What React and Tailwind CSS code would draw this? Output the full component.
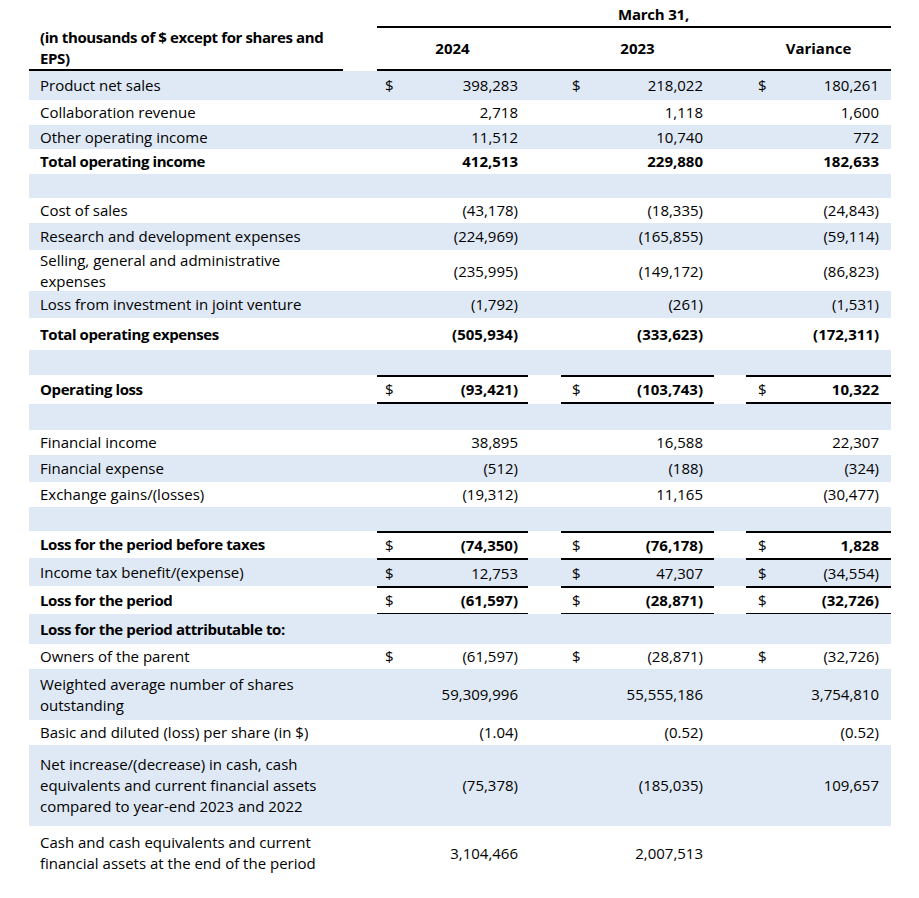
import React from "react";

const GRID =
  "grid grid-cols-[348px_38px_113px_33px_41px_112px_32px_44px_101px]";

const rows = [
  { label: "Product net sales", h: "h-[29px]", blue: true, v: ["$", "398,283", "$", "218,022", "$", "180,261"] },
  { label: "Collaboration revenue", h: "h-[25px]", v: ["", "2,718", "", "1,118", "", "1,600"] },
  { label: "Other operating income", h: "h-[24px]", blue: true, v: ["", "11,512", "", "10,740", "", "772"] },
  { label: "Total operating income", bold: true, h: "h-[25px]", v: ["", "412,513", "", "229,880", "", "182,633"] },
  { blank: true, h: "h-[24px]", blue: true },
  { label: "Cost of sales", h: "h-[25px]", v: ["", "(43,178)", "", "(18,335)", "", "(24,843)"] },
  { label: "Research and development expenses", h: "h-[27px]", blue: true, v: ["", "(224,969)", "", "(165,855)", "", "(59,114)"] },
  { label: ["Selling, general and administrative", "expenses"], h: "h-[41px]", v: ["", "(235,995)", "", "(149,172)", "", "(86,823)"] },
  { label: "Loss from investment in joint venture", h: "h-[27px]", blue: true, v: ["", "(1,792)", "", "(261)", "", "(1,531)"] },
  { label: "Total operating expenses", bold: true, h: "h-[32px]", v: ["", "(505,934)", "", "(333,623)", "", "(172,311)"] },
  { blank: true, h: "h-[25px]", blue: true },
  { label: "Operating loss", bold: true, h: "h-[29px]", top: "border-t-2", bottom: "border-b-2", v: ["$", "(93,421)", "$", "(103,743)", "$", "10,322"] },
  { blank: true, h: "h-[26px]", blue: true },
  { label: "Financial income", h: "h-[25px]", v: ["", "38,895", "", "16,588", "", "22,307"] },
  { label: "Financial expense", h: "h-[27px]", blue: true, v: ["", "(512)", "", "(188)", "", "(324)"] },
  { label: "Exchange gains/(losses)", h: "h-[25px]", v: ["", "(19,312)", "", "11,165", "", "(30,477)"] },
  { blank: true, h: "h-[24px]", blue: true },
  { label: "Loss for the period before taxes", bold: true, h: "h-[27px]", top: "border-t-2", v: ["$", "(74,350)", "$", "(76,178)", "$", "1,828"] },
  { label: "Income tax benefit/(expense)", h: "h-[28px]", blue: true, top: "border-t-2", v: ["$", "12,753", "$", "47,307", "$", "(34,554)"] },
  { label: "Loss for the period", bold: true, h: "h-[28px]", top: "border-t-2", bottom: "border-b", v: ["$", "(61,597)", "$", "(28,871)", "$", "(32,726)"] },
  { label: "Loss for the period attributable to:", bold: true, h: "h-[30px]", blue: true, v: ["", "", "", "", "", ""] },
  { label: "Owners of the parent", h: "h-[25px]", v: ["$", "(61,597)", "$", "(28,871)", "$", "(32,726)"] },
  { label: ["Weighted average number of shares", "outstanding"], h: "h-[51px]", blue: true, v: ["", "59,309,996", "", "55,555,186", "", "3,754,810"] },
  { label: "Basic and diluted (loss) per share (in $)", h: "h-[25px]", v: ["", "(1.04)", "", "(0.52)", "", "(0.52)"] },
  { label: ["Net increase/(decrease) in cash, cash", "equivalents and current financial assets", "compared to year-end 2023 and 2022"], h: "h-[81px]", blue: true, v: ["", "(75,378)", "", "(185,035)", "", "109,657"] },
  { label: ["Cash and cash equivalents and current", "financial assets at the end of the period"], h: "h-[54px]", v: ["", "3,104,466", "", "2,007,513", "", ""] },
];

const dollarPad = ["pl-2", "pl-[11px]", "pl-3"];
const numPad = ["pr-[10px]", "pr-[11px]", "pr-3"];

function Row({ r }) {
  const bg = r.blue ? "bg-[#dfe9f5]" : "bg-white";
  if (r.blank) {
    return <div className={`${r.h} ${bg}`} />;
  }
  const weight = r.bold ? "font-bold" : "font-normal";
  const labelWeight = r.bold ? "font-bold tracking-[-0.4px]" : "font-normal";
  const bt = r.top || "";
  const bb = r.bottom || "";
  const cells = [];
  for (let i = 0; i < 3; i++) {
    cells.push(
      <div
        key={`d${i}`}
        className={`flex items-center ${dollarPad[i]} ${bt} ${bb} border-black font-normal`}
      >
        {r.v[i * 2]}
      </div>
    );
    cells.push(
      <div
        key={`n${i}`}
        className={`flex items-center justify-end ${numPad[i]} ${bt} ${bb} border-black ${weight}`}
      >
        {r.v[i * 2 + 1]}
      </div>
    );
    if (i < 2) cells.push(<div key={`g${i}`} />);
  }
  return (
    <div className={`${GRID} ${r.h} ${bg}`}>
      <div className={`flex items-center pl-[11px] leading-[21px] ${labelWeight}`}>
        {Array.isArray(r.label) ? (
          <div>
            {r.label.map((l, i) => (
              <div key={i}>{l}</div>
            ))}
          </div>
        ) : (
          r.label
        )}
      </div>
      {cells}
    </div>
  );
}

export default function App() {
  return (
    <div className="min-h-[898px] w-[919px] bg-white text-[15px] text-black font-[family-name:'Open_Sans',sans-serif]">
      <div className="ml-[29px] w-[862px]">
        <div className={`${GRID} h-[26px]`}>
          <div />
          <div />
          <div />
          <div />
          <div className="col-span-3 flex items-center justify-center pt-[3px] font-bold tracking-[-0.2px]">
            March 31,
          </div>
          <div />
          <div />
        </div>
        <div className={`${GRID} h-[45px]`}>
          <div className="flex">
            <div className="flex h-full w-[314px] flex-col justify-end border-b-2 border-black pl-[11px] font-bold leading-[21px] tracking-[-0.4px]">
              <div>(in thousands of $ except for shares and</div>
              <div>EPS)</div>
            </div>
          </div>
          <div className="col-span-2 flex items-center justify-center border-y-2 border-black font-bold">
            2024
          </div>
          <div className="border-y-2 border-black" />
          <div className="col-span-2 flex items-center justify-center border-y-2 border-black font-bold">
            2023
          </div>
          <div className="border-y-2 border-black" />
          <div className="col-span-2 flex items-center justify-center border-y-2 border-black font-bold">
            Variance
          </div>
        </div>
        {rows.map((r, i) => (
          <Row key={i} r={r} />
        ))}
      </div>
    </div>
  );
}
